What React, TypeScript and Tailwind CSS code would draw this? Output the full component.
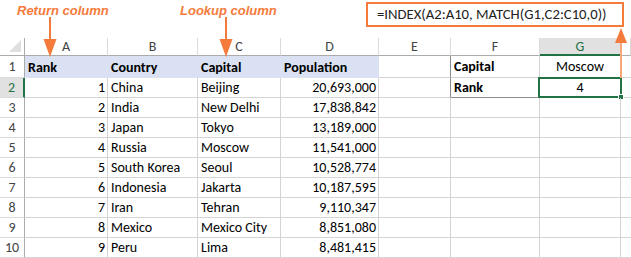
import React from "react";

const COLS = ["A", "B", "C", "D", "E", "F", "G", ""];
const WIDTHS = ["w-[25px]", "w-[83px]", "w-[90px]", "w-[83px]", "w-[98px]", "w-[72px]", "w-[89px]", "w-[81px]", "w-[10px]"];

const data: [string, string, string, string][] = [
  ["1", "China", "Beijing", "20,693,000"],
  ["2", "India", "New Delhi", "17,838,842"],
  ["3", "Japan", "Tokyo", "13,189,000"],
  ["4", "Russia", "Moscow", "11,541,000"],
  ["5", "South Korea", "Seoul", "10,528,774"],
  ["6", "Indonesia", "Jakarta", "10,187,595"],
  ["7", "Iran", "Tehran", "9,110,347"],
  ["8", "Mexico", "Mexico City", "8,851,080"],
  ["9", "Peru", "Lima", "8,481,415"],
];

const font = "font-['Carlito','Lato',sans-serif]";

function DownArrow({ className }: { className: string }) {
  return (
    <svg className={className} width="14" height="40" viewBox="0 0 14 40">
      <line x1="7" y1="0" x2="7" y2="26" stroke="#F47B3C" strokeWidth="2" />
      <polygon points="0.5,22 13.5,22 7,40" fill="#F47B3C" />
    </svg>
  );
}

function UpArrow({ className }: { className: string }) {
  return (
    <svg className={className} width="12" height="50" viewBox="0 0 12 50">
      <line x1="6" y1="12" x2="6" y2="50" stroke="#F8A77A" strokeWidth="2" />
      <polygon points="0,15 12,15 6,0" fill="#F47B3C" />
    </svg>
  );
}

export default function App() {
  return (
    <div className={`w-[631px] h-[258px] bg-white overflow-hidden relative ${font} text-[14px] text-black`}>
      {/* top annotation band */}
      <div className="relative h-[38px]">
        <div className="absolute left-[17px] top-[1px] font-['Liberation_Sans',sans-serif] font-bold italic text-[13px] text-[#F47B3C]">
          Return column
        </div>
        <div className="absolute left-[180px] top-[1px] font-['Liberation_Sans',sans-serif] font-bold italic text-[13px] text-[#F47B3C]">
          Lookup column
        </div>
        <div className="absolute left-[366px] top-[2px] w-[258px] h-[25px] border-2 border-[#F47B3C] flex items-center pl-[9px] text-[14.7px] text-[#222]">
          =INDEX(A2:A10, MATCH(G1,C2:C10,0))
        </div>
      </div>
      <DownArrow className="absolute left-[43px] top-[17px]" />
      <DownArrow className="absolute left-[219px] top-[17px]" />
      <UpArrow className="absolute left-[615px] top-[28px] z-10" />

      {/* column header row */}
      <div className="flex h-[18px]">
        <div className={`${WIDTHS[0]} shrink-0 border-r border-b border-[#ababab] relative`}>
          <div className="absolute right-[3px] bottom-[3px] w-0 h-0 border-l-[12px] border-l-transparent border-b-[12px] border-b-[#dfdfdf]" />
        </div>
        {COLS.map((c, i) => {
          const active = c === "G";
          return (
            <div
              key={i}
              className={`${WIDTHS[i + 1]} shrink-0 flex items-center justify-center text-[14px] ${
                active
                  ? "bg-[#e1e1e1] text-[#217346] border-b-2 border-b-[#217346] border-r border-r-[#dadada]"
                  : "text-[#444] border-b border-b-[#ababab] border-r border-r-[#dadada]"
              }`}
            >
              {c}
            </div>
          );
        })}
      </div>

      {/* row 1 */}
      <div className="flex h-[22px]">
        <div className={`${WIDTHS[0]} shrink-0 flex items-center justify-center text-[#444] border-r border-r-[#ababab] border-b border-b-[#dadada]`}>1</div>
        {["Rank", "Country", "Capital", "Population"].map((t, i) => (
          <div key={t} className={`${WIDTHS[i + 1]} shrink-0 bg-[#D9E1F2] font-bold flex items-center pl-[3px]`}>
            {t}
          </div>
        ))}
        <div className={`${WIDTHS[5]} shrink-0 border-r border-r-[#8c8c8c] border-b border-b-[#d4d4d4]`} />
        <div className={`${WIDTHS[6]} shrink-0 border-r border-r-[#d4d4d4] border-b border-b-[#d4d4d4] font-bold flex items-center pl-[3px]`}>Capital</div>
        <div className={`${WIDTHS[7]} shrink-0 border-r border-r-[#d4d4d4] border-b border-b-[#d4d4d4] flex items-center justify-center`}>Moscow</div>
        <div className={`${WIDTHS[8]} shrink-0 border-b border-b-[#d4d4d4]`} />
      </div>

      {/* rows 2-10 */}
      {data.map((r, ri) => {
        const rowNum = ri + 2;
        const isActive = rowNum === 2;
        return (
          <div key={rowNum} className="flex h-[20px]">
            <div
              className={`${WIDTHS[0]} shrink-0 flex items-center justify-center border-b border-b-[#dadada] ${
                isActive ? "bg-[#e1e1e1] text-[#217346] border-r-2 border-r-[#217346]" : "text-[#444] border-r border-r-[#ababab]"
              }`}
            >
              {rowNum}
            </div>
            <div className={`${WIDTHS[1]} shrink-0 border-r border-b border-[#d4d4d4] flex items-center justify-end pr-[2px]`}>{r[0]}</div>
            <div className={`${WIDTHS[2]} shrink-0 border-r border-b border-[#d4d4d4] flex items-center pl-[3px]`}>{r[1]}</div>
            <div className={`${WIDTHS[3]} shrink-0 border-r border-b border-[#d4d4d4] flex items-center pl-[3px]`}>{r[2]}</div>
            <div className={`${WIDTHS[4]} shrink-0 border-r border-b border-[#d4d4d4] flex items-center justify-end pr-[2px]`}>{r[3]}</div>
            <div className={`${WIDTHS[5]} shrink-0 border-b border-[#d4d4d4] ${isActive ? "border-r border-r-[#8c8c8c]" : "border-r"}`} />
            <div
              className={`${WIDTHS[6]} shrink-0 border-r border-[#d4d4d4] ${
                isActive ? "border-b border-b-[#8c8c8c] font-bold flex items-center pl-[3px]" : "border-b"
              }`}
            >
              {isActive ? "Rank" : ""}
            </div>
            <div className={`${WIDTHS[7]} shrink-0 border-r border-b border-[#d4d4d4] relative ${isActive ? "flex items-center justify-center" : ""}`}>
              {isActive && (
                <>
                  <span>4</span>
                  <div className="absolute -left-[2px] -top-[1px] -right-[2px] -bottom-[1px] border-2 border-[#217346]" />
                  <div className="absolute -right-[4px] -bottom-[3px] w-[6px] h-[6px] bg-[#217346] border border-white" />
                </>
              )}
            </div>
            <div className={`${WIDTHS[8]} shrink-0 border-b border-[#d4d4d4]`} />
          </div>
        );
      })}
    </div>
  );
}
